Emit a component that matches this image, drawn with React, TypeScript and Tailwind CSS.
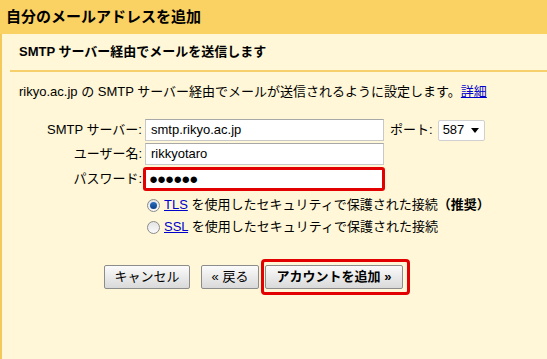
import React from "react";

const font = "font-['Liberation_Sans','Noto_Sans_CJK_JP',sans-serif]";

function Radio({ checked }: { checked?: boolean }) {
  return (
    <span className="flex h-[13px] w-[13px] items-center justify-center rounded-full border border-[#8a8a8a] bg-gradient-to-b from-[#e4e4e4] to-[#fafafa]">
      {checked && (
        <span className="h-[7px] w-[7px] rounded-full bg-gradient-to-b from-[#2b6fc4] to-[#0c3f85]" />
      )}
    </span>
  );
}

function Field({
  label,
  value,
  danger,
}: {
  label: string;
  value: string;
  danger?: boolean;
}) {
  return (
    <div className="flex items-center">
      <span className="w-[141px] pr-[1px] text-right">{label}</span>
      {danger ? (
        <div className="flex h-[24px] w-[242px] items-center rounded-[3px] border-[3px] border-[#e30000] bg-white pl-[3px] text-[15px] tracking-[-1px]">
          {value}
        </div>
      ) : (
        <div className="ml-[2px] flex h-[22px] w-[239px] items-center border border-[#c8c8c8] border-t-[#a8a8a8] bg-white pl-[5px]">
          {value}
        </div>
      )}
    </div>
  );
}

export default function App() {
  return (
    <div className={`${font} h-[359px] w-[547px] bg-[#fff7d7] text-[13px] text-black`}>
      <div className="flex h-[34px] items-center bg-[#fad163] pl-[6px] text-[15px] font-bold">
        自分のメールアドレスを追加
      </div>

      <div className="h-[325px] border-l-2 border-[#f2c95a]">
        <div className="flex h-[36px] items-center pl-[17px] font-bold">
          SMTP サーバー経由でメールを送信します
        </div>
        <div className="ml-[8px] h-[2px] bg-[#f5d06b]" />

        <div className="flex h-[40px] items-center pl-[17px]">
          rikyo.ac.jp の SMTP サーバー経由でメールが送信されるように設定します。
          <a className="text-[#0000cc] underline">詳細</a>
        </div>

        <div className="mt-[7px] flex flex-col gap-[2px]">
          <div className="flex items-center">
            <Field label="SMTP サーバー:" value="smtp.rikyo.ac.jp" />
            <span className="ml-[6px]">ポート:</span>
            <div className="ml-[5px] flex h-[21px] w-[47px] items-center justify-between rounded-[2px] border border-[#d0d0d0] bg-white pl-[4px] pr-[5px]">
              <span>587</span>
              <span className="border-x-[4px] border-t-[5px] border-x-transparent border-t-black" />
            </div>
          </div>
          <Field label="ユーザー名:" value="rikkyotaro" />
          <Field label="パスワード:" value="●●●●●●" danger />
        </div>

        <div className="ml-[145px] mt-[3px] flex flex-col">
          <div className="flex h-[22px] items-center gap-[4px]">
            <Radio checked />
            <span>
              <a className="text-[#0000cc] underline">TLS</a> を使用したセキュリティで保護された接続
              <span className="font-bold">（推奨）</span>
            </span>
          </div>
          <div className="flex h-[22px] items-center gap-[4px]">
            <Radio />
            <span>
              <a className="text-[#0000cc] underline">SSL</a> を使用したセキュリティで保護された接続
            </span>
          </div>
        </div>

        <div className="ml-[102px] mt-[21px] flex items-center">
          <button className="h-[24px] w-[86px] rounded-[2px] border border-[#8c8c8c] bg-gradient-to-b from-[#fbfbfb] to-[#d9d9d9]">
            キャンセル
          </button>
          <button className="ml-[11px] h-[24px] w-[58px] rounded-[2px] border border-[#8c8c8c] bg-gradient-to-b from-[#fbfbfb] to-[#d9d9d9]">
            « 戻る
          </button>
          <div className="ml-[2px] rounded-[4px] border-[3px] border-[#e30000] pb-[3px] pl-[1px] pr-[4px] pt-[3px]">
            <button className="block h-[24px] w-[138px] rounded-[2px] border border-[#8c8c8c] bg-gradient-to-b from-[#fbfbfb] to-[#d9d9d9] font-bold">
              アカウントを追加 »
            </button>
          </div>
        </div>
      </div>
    </div>
  );
}
